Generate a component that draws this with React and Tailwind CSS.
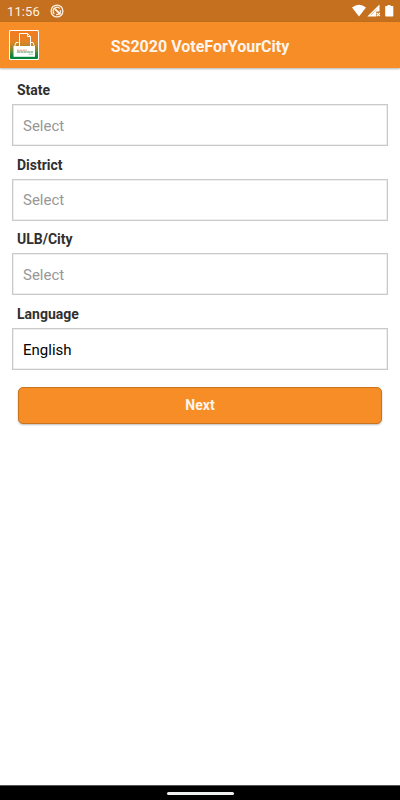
const fields = [
  { label: "State", value: "" },
  { label: "District", value: "" },
  { label: "ULB/City", value: "" },
  { label: "Language", value: "English" },
];

const AppLogo = () => (
  <svg width="30" height="30" viewBox="0 0 30 30">
    <defs>
      <linearGradient id="logo-bg" x1="0" y1="0" x2="0" y2="1">
        <stop offset="0" stopColor="#f47b20" />
        <stop offset="0.42" stopColor="#e08425" />
        <stop offset="0.7" stopColor="#6c8c32" />
        <stop offset="0.9" stopColor="#07843c" />
      </linearGradient>
    </defs>
    <rect width="30" height="30" rx="1.5" fill="#fff" />
    <rect x="1" y="1" width="28" height="28" rx="1" fill="url(#logo-bg)" />
    <path d="M9.5 12.5H7L5.5 16.5M21.5 12.5H24l1.5 4" stroke="#fff" fill="none" />
    <path d="M10.5 16.5v-13h8l3 3v10" stroke="#fff" fill="none" />
    <path d="M18.5 3.5v3h3" stroke="#fff" fill="none" />
    <path d="M4.5 16h21.5v10.8H4.5z" fill="#fff" />
    <path d="M8 20.2h10" stroke="#ee8b69" strokeWidth="1" strokeDasharray="2.5 .4" />
    <path d="M8 22h16" stroke="#4b8e60" strokeWidth="1.2" strokeDasharray="3 .4" />
    <path d="M19.5 24.2H24" stroke="#9bbba8" strokeWidth=".8" />
  </svg>
);

const StatusBar = () => (
  <div className="flex h-[22px] items-center justify-between bg-[#c4701f] pr-[6px] pl-[7px] text-white">
    <div className="flex items-center">
      <span className="w-[43px] pt-px text-[13px] leading-[21px] tracking-[0.1px] text-[#fff1e4]">11:56</span>
      <svg width="14" height="14" viewBox="0 0 14 14" fill="none" stroke="#fff1e4">
        <circle cx="7" cy="7" r="5.9" strokeWidth="1.3" />
        <path d="M4.3 9.8A3.7 3.7 0 0 1 5 3.9a3.7 3.7 0 0 1 4.8.6M10.5 6.2A3.7 3.7 0 0 1 6 10.5" strokeWidth="1.3" />
        <path d="m5 5 5.4 5.4" strokeWidth="1.9" />
      </svg>
    </div>
    <svg width="42" height="14" viewBox="0 0 42 14" fill="#fff">
      <path d="M0 3.4Q7-2 14 3.4L7 12.4z" />
      <path d="M27.5.6v6.9h-3.2v5h-9z" />
      <path d="M18.6 11.3 24.6 5.3" stroke="#c4701f" strokeWidth=".5" />
      <path d="m24.9 9 3 3.2m0-3.2-3 3.2" stroke="#fff" strokeWidth="1.1" />
      <path d="M35.5.9h3v1.2h2.2q.6 0 .6.7v9q0 .8-.8.8H34q-.8 0-.8-.8v-9q0-.7.6-.7h1.7z" />
    </svg>
  </div>
);

const Header = () => (
  <header className="grid h-[46px] grid-cols-[50px_1fr_50px] items-center bg-[#f68d27] shadow-[0_1px_2px_rgba(0,0,0,0.3)]">
    <div className="pl-[9px]">
      <AppLogo />
    </div>
    <h1 className="pt-[3px] text-center text-[16px] leading-5 font-bold text-[#fff5ed]">SS2020 VoteForYourCity</h1>
  </header>
);

const Field = ({ label, value }) => (
  <div className="h-[74.7px]">
    <label className="block h-[27px] pl-[5px] text-[14px] leading-[26px] font-bold text-[#303030]">{label}</label>
    <div className="flex h-[42px] items-center border border-[#c8cacc] bg-white pt-[2px] pl-[10px] shadow-[inset_0_0_0_0.5px_#dcdedf]">
      <span className={value ? "text-[15px] text-black" : "text-[15px] text-[#979797]"}>{value || "Select"}</span>
    </div>
  </div>
);

export default function App() {
  return (
    <div className="flex h-[800px] w-[400px] flex-col overflow-hidden bg-white font-[Roboto,sans-serif]">
      <StatusBar />
      <Header />
      <main className="flex-1 px-3 pt-[9px]">
        {fields.map((field) => (
          <Field key={field.label} {...field} />
        ))}
        <button
          type="button"
          className="mx-[6px] mt-[11px] block h-[37px] w-[364px] rounded-[5px] border border-[#c9731d] bg-[#f68d27] pt-px text-[14px] font-bold text-[#fff5ed] shadow-[0_1px_2px_rgba(0,0,0,0.25)]"
        >
          Next
        </button>
      </main>
      <div className="flex h-[15px] justify-center border-t border-[#555] bg-black pt-[6px]">
        <div className="h-[3px] w-[67px] rounded-full bg-[#eef0f0]" />
      </div>
    </div>
  );
}
